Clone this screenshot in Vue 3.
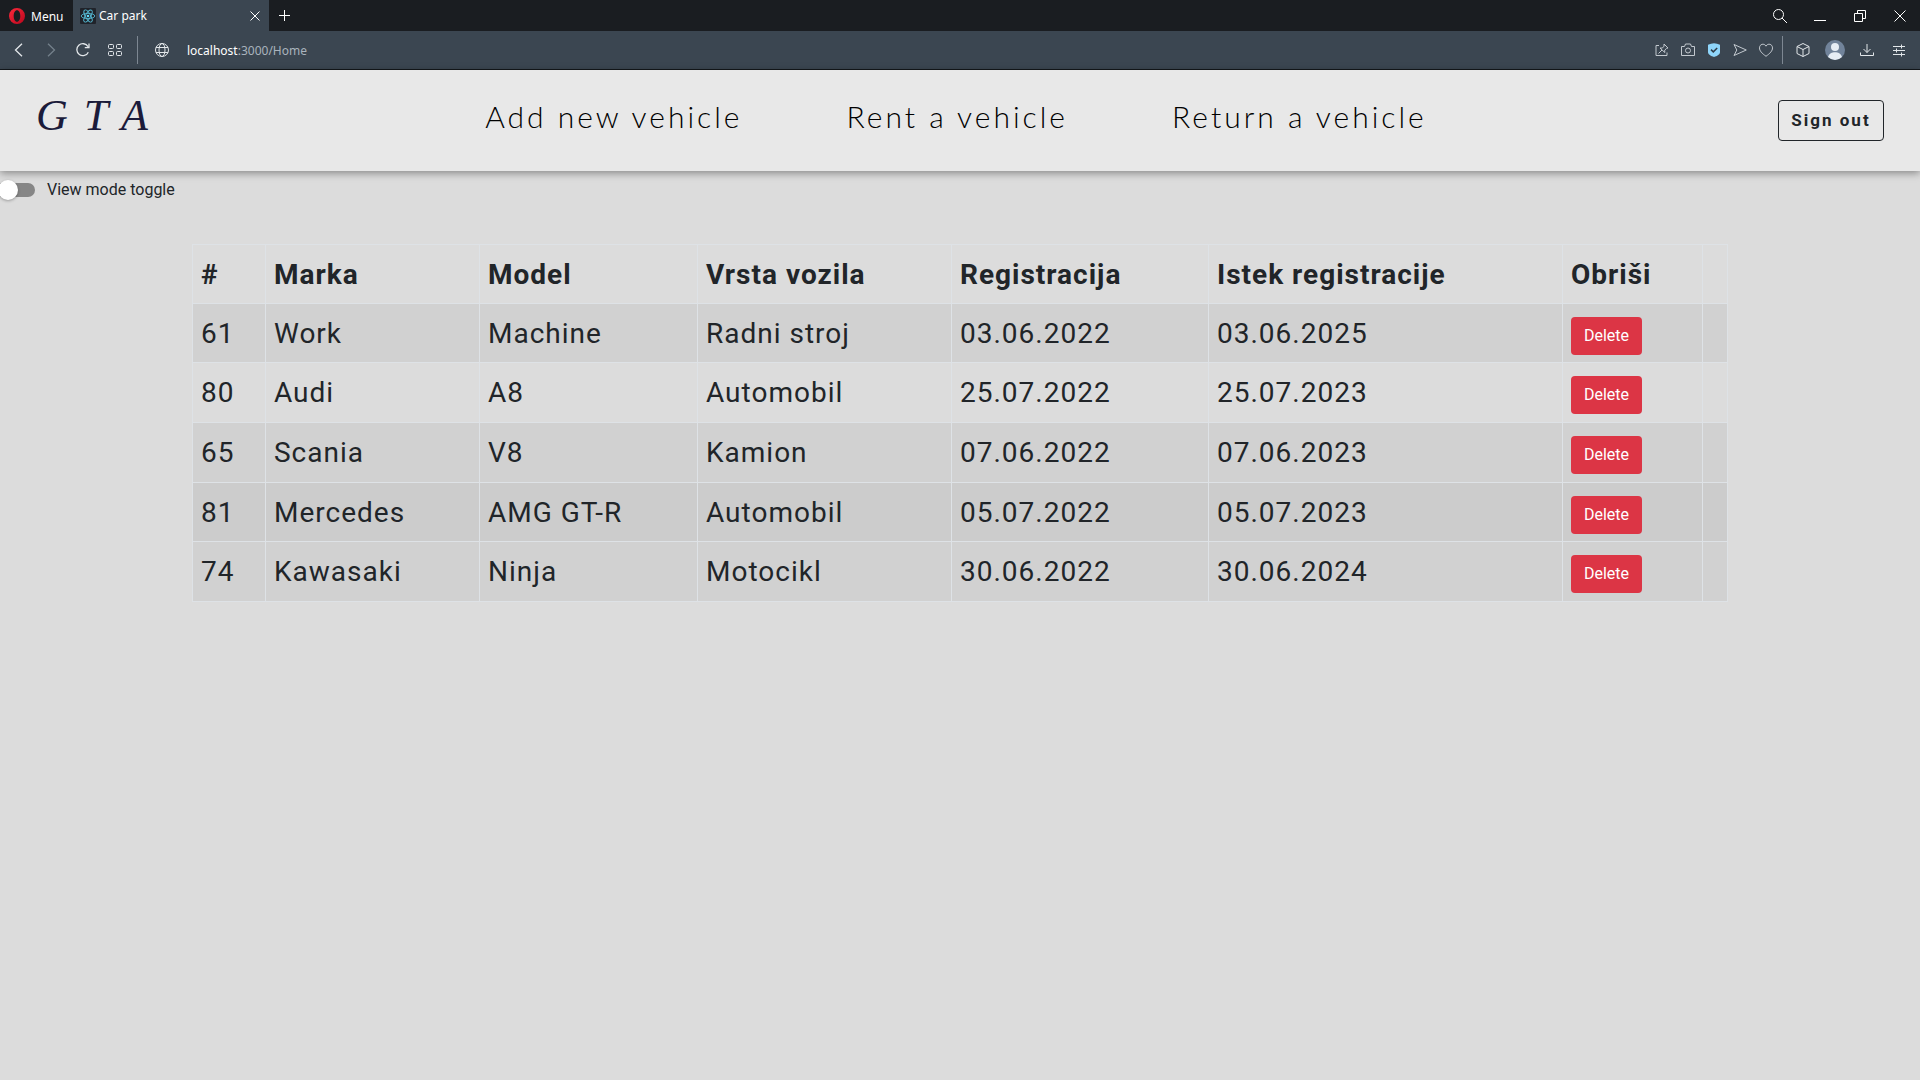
<script setup>
import { ref } from 'vue'

const listView = ref(false)

const links = ['Add new vehicle', 'Rent a vehicle', 'Return a vehicle']

const columns = [
  { label: '#', width: 73 },
  { label: 'Marka', width: 214 },
  { label: 'Model', width: 218 },
  { label: 'Vrsta vozila', width: 254 },
  { label: 'Registracija', width: 257 },
  { label: 'Istek registracije', width: 354 },
  { label: 'Obriši', width: 140 },
  { label: '', width: 25 },
]
const totalWidth = columns.reduce((sum, c) => sum + c.width, 0)

const vehicles = ref([
  { id: 61, brand: 'Work', model: 'Machine', type: 'Radni stroj', registered: '03.06.2022', expires: '03.06.2025' },
  { id: 80, brand: 'Audi', model: 'A8', type: 'Automobil', registered: '25.07.2022', expires: '25.07.2023' },
  { id: 65, brand: 'Scania', model: 'V8', type: 'Kamion', registered: '07.06.2022', expires: '07.06.2023' },
  { id: 81, brand: 'Mercedes', model: 'AMG GT-R', type: 'Automobil', registered: '05.07.2022', expires: '05.07.2023', active: true },
  { id: 74, brand: 'Kawasaki', model: 'Ninja', type: 'Motocikl', registered: '30.06.2022', expires: '30.06.2024' },
])

function remove(id) {
  vehicles.value = vehicles.value.filter((v) => v.id !== id)
}
</script>

<template>
  <div class="browser">
    <div class="titlebar">
      <button class="menu" type="button">
        <svg width="16" height="16" viewBox="0 0 16 16">
          <defs>
            <linearGradient id="ring" x1="0" y1="0" x2="1" y2="1">
              <stop offset="0" stop-color="#ff2a3c" />
              <stop offset="1" stop-color="#b8061c" />
            </linearGradient>
          </defs>
          <path fill="url(#ring)" fill-rule="evenodd" d="M8 0a8 8 0 1 0 0 16A8 8 0 0 0 8 0Zm0 2.2c2 0 3.300 2.600 3.300 5.800S10 13.800 8 13.800 4.700 11.200 4.700 8 6 2.200 8 2.200Z" />
        </svg>
        Menu
      </button>
      <div class="tab">
        <svg class="favicon" width="16" height="16" viewBox="0 0 16 16">
          <rect width="16" height="16" rx="1" fill="#20232a" />
          <g fill="none" stroke="#55b9d3" stroke-width="0.900">
            <ellipse cx="8" cy="8" rx="6.800" ry="2.600" />
            <ellipse cx="8" cy="8" rx="6.800" ry="2.600" transform="rotate(60 8 8)" />
            <ellipse cx="8" cy="8" rx="6.800" ry="2.600" transform="rotate(120 8 8)" />
          </g>
          <circle cx="8" cy="8" r="1.300" fill="#61dafb" />
        </svg>
        <span class="tab-title">Car park</span>
        <button class="tab-close" type="button" aria-label="Close tab">
          <svg width="10" height="10" viewBox="0 0 10 10"><path d="M.5.500l9 9M9.500.500l-9 9" /></svg>
        </button>
      </div>
      <button class="new-tab" type="button" aria-label="New tab">
        <svg width="11" height="11" viewBox="0 0 11 11"><path d="M5.500 0v11M0 5.500h11" /></svg>
      </button>
      <div class="window-controls">
        <button type="button" aria-label="Search">
          <svg width="16" height="16" viewBox="0 0 16 16"><circle cx="6.500" cy="6.500" r="5" /><path d="M10 10l5 5" /></svg>
        </button>
        <button type="button" aria-label="Minimize">
          <svg width="12" height="12" viewBox="0 0 12 12"><path d="M0 11.500h12" /></svg>
        </button>
        <button type="button" aria-label="Restore">
          <svg width="12" height="12" viewBox="0 0 12 12"><path d="M.5 3.500h8v8h-8zM3.500 3.500v-3h8v8h-3" /></svg>
        </button>
        <button type="button" aria-label="Close">
          <svg width="12" height="12" viewBox="0 0 12 12"><path d="M.5.500l11 11M11.500.500l-11 11" /></svg>
        </button>
      </div>
    </div>

    <div class="toolbar">
      <button class="tool" type="button" aria-label="Back">
        <svg width="14" height="14" viewBox="0 0 14 14"><path stroke-width="1.300" d="M10 .8L3.500 7l6.500 6.200" /></svg>
      </button>
      <button class="tool dim" type="button" aria-label="Forward">
        <svg width="14" height="14" viewBox="0 0 14 14"><path stroke-width="1.300" d="M4 .8L10.500 7 4 13.200" /></svg>
      </button>
      <button class="tool" type="button" aria-label="Reload">
        <svg width="14" height="14" viewBox="0 0 14 14"><path stroke-width="1.300" d="M12.300 9.200A6 6 0 1 1 12 3.600M13 .5v4.200H8.800" /></svg>
      </button>
      <button class="tool" type="button" aria-label="Speed dial">
        <svg width="14" height="12" viewBox="0 0 14 12">
          <rect x=".5" y=".5" width="5" height="4" rx="1" /><rect x="8.500" y=".5" width="5" height="4" rx="1" />
          <rect x=".5" y="7.500" width="5" height="4" rx="1" /><rect x="8.500" y="7.500" width="5" height="4" rx="1" />
        </svg>
      </button>
      <span class="divider left"></span>
      <button class="tool" type="button" aria-label="Site information">
        <svg width="14" height="14" viewBox="0 0 14 14"><circle cx="7" cy="7" r="6.500" /><ellipse cx="7" cy="7" rx="3" ry="6.500" /><path d="M1 4.500h12M1 9.500h12" /></svg>
      </button>
      <span class="address">localhost<span>:3000/Home</span></span>

      <div class="tools">
        <button class="tool narrow" type="button" aria-label="Share">
          <svg width="14" height="14" viewBox="0 0 14 14"><path d="M4 2.500H1v10h11V9.500M9 1l4 4-1.500.4-1.800 1.800.1 2.300L5 5l2.300.1L9 3.200zM7 7l-3.500 3.500" /></svg>
        </button>
        <button class="tool narrow" type="button" aria-label="Snapshot">
          <svg width="14" height="14" viewBox="0 0 14 14"><path d="M.5 3.500h3L4.500 1h5l1 2.500h3v9H.500z" /><circle cx="7" cy="7.500" r="2.500" /></svg>
        </button>
        <button class="tool narrow" type="button" aria-label="Protection">
          <svg width="14" height="14" viewBox="0 0 14 14"><path stroke="none" fill="#8fd6fb" d="M1 1.800Q7-1.200 13 1.800V9c0 2.500-3 4-6 5C4 13 1 11.500 1 9z" /><path stroke="#2f3d49" stroke-width="1.500" d="M4 6.600l2.300 2.300L10.200 5" /></svg>
        </button>
        <button class="tool narrow" type="button" aria-label="Send">
          <svg width="14" height="14" viewBox="0 0 14 14"><path d="M1 1.500L13.300 7 1 12.500 3.800 7z" /></svg>
        </button>
        <button class="tool narrow" type="button" aria-label="Favourite">
          <svg width="14" height="14" viewBox="0 0 14 14"><path d="M7 13.300C3 10.300.5 8 .5 4.900.5 1 5.200-.2 7 3.200 8.800-.2 13.500 1 13.500 4.900 13.500 8 11 10.300 7 13.300z" /></svg>
        </button>
        <span class="divider right"></span>
        <button class="tool" type="button" aria-label="Extensions">
          <svg width="14" height="14" viewBox="0 0 14 14"><path d="M7 .5l6 3v7l-6 3-6-3v-7zM1 3.500l6 3 6-3M7 6.500v7" /></svg>
        </button>
        <button class="tool" type="button" aria-label="Profile">
          <svg width="20" height="20" viewBox="0 0 20 20"><g stroke="none"><circle cx="10" cy="10" r="10" fill="#71839a" /><circle cx="10" cy="7" r="4" fill="#e6edf5" /><path fill="#e6edf5" d="M3 17.100C4 13.500 7 12.200 10 12.200s6 1.300 7 4.900A10 10 0 0 1 3 17.100z" /></g></svg>
        </button>
        <button class="tool" type="button" aria-label="Downloads">
          <svg width="14" height="14" viewBox="0 0 14 14"><path d="M7 1v8.500M3.500 6L7 9.500 10.500 6M.5 9.500v3h13v-3" /></svg>
        </button>
        <button class="tool" type="button" aria-label="Easy setup">
          <svg width="12" height="14" viewBox="0 0 12 14"><path d="M0 3.500h12M0 7.500h12M0 11.500h12M8.500 1.500v4M3.500 5.500v4M8.500 9.500v4" /></svg>
        </button>
      </div>
    </div>
  </div>

  <header class="header">
    <a class="logo" href="#">GTA</a>
    <nav class="nav">
      <a v-for="link in links" :key="link" href="#">{{ link }}</a>
    </nav>
    <button class="sign-out" type="button">Sign out</button>
  </header>

  <main>
    <label class="switch">
      <input v-model="listView" type="checkbox" role="switch" />
      View mode toggle
    </label>

    <table class="vehicles">
      <colgroup>
        <col v-for="(c, i) in columns" :key="i" :style="{ width: (c.width / totalWidth) * 100 + '%' }" />
      </colgroup>
      <thead>
        <tr>
          <th v-for="(c, i) in columns" :key="i" scope="col">{{ c.label }}</th>
        </tr>
      </thead>
      <tbody>
        <tr v-for="v in vehicles" :key="v.id" :class="{ active: v.active }">
          <td>{{ v.id }}</td>
          <td>{{ v.brand }}</td>
          <td>{{ v.model }}</td>
          <td>{{ v.type }}</td>
          <td>{{ v.registered }}</td>
          <td>{{ v.expires }}</td>
          <td><button class="delete" type="button" @click="remove(v.id)">Delete</button></td>
          <td></td>
        </tr>
      </tbody>
    </table>
  </main>
</template>

<style>
body {
  background: #dcdcdc;
  color: #212529;
  font-family: Roboto, sans-serif;
  font-size: 16px;
}
</style>

<style scoped>
button {
  border: 0;
  background: none;
  color: inherit;
  font: inherit;
  padding: 0;
  cursor: pointer;
}
a {
  color: inherit;
  text-decoration: none;
}

.browser {
  color: #fff;
  font-family: "Noto Sans", sans-serif;
  font-size: 12px;
  border-bottom: 1px solid #14181c;
}
.browser svg {
  display: block;
  fill: none;
  stroke: currentColor;
}
.browser svg.favicon,
.menu svg {
  stroke: none;
}
.titlebar {
  display: flex;
  align-items: stretch;
  height: 31px;
  background: #1a1d21;
}
.menu {
  display: flex;
  align-items: center;
  gap: 6px;
  width: 73px;
  padding: 1px 0 0 9px;
}
.tab {
  display: flex;
  align-items: center;
  gap: 3px;
  width: 189px;
  padding-left: 7px;
  background: #3b4651;
}
.tab-title {
  flex: 1;
}
.tab-close,
.new-tab {
  display: flex;
  align-items: center;
  justify-content: center;
  width: 28px;
}
.new-tab {
  width: 30px;
}
.window-controls {
  display: flex;
  margin-left: auto;
}
.window-controls button {
  display: flex;
  align-items: center;
  justify-content: center;
  width: 40px;
}
.window-controls button:nth-child(2) {
  align-items: flex-start;
  padding-top: 9px;
}
.toolbar {
  display: flex;
  align-items: center;
  height: 38px;
  padding: 0 5px 0 3px;
  background: #3b4651;
  color: #e3e7ea;
}
.tool {
  display: flex;
  align-items: center;
  justify-content: center;
  width: 32px;
  height: 28px;
}
.tool.narrow {
  width: 26px;
  color: #c3c9cf;
}
.tool.dim {
  color: #74808b;
}
.divider {
  width: 1px;
  height: 28px;
  background: #7d8792;
}
.divider.left {
  margin: 0 8px 0 6px;
}
.divider.right {
  margin: 0 4px 0 3px;
}
.address {
  margin-left: 9px;
  color: #fff;
}
.address span {
  color: #a9b3bd;
}
.tools {
  display: flex;
  align-items: center;
  margin-left: auto;
}

.header {
  display: grid;
  grid-template-columns: 1fr auto 1fr;
  align-items: center;
  height: 101px;
  padding: 0 36px;
  background: #e8e8e8;
  box-shadow: 0 2px 8px rgba(0, 0, 0, 0.4);
}
.logo {
  color: #1b1b3a;
  font: italic 44px "Liberation Serif", serif;
  letter-spacing: 16px;
  padding-bottom: 10px;
}
.nav {
  display: flex;
  gap: 104px;
  color: #000;
  font: 300 30px Lato, sans-serif;
  letter-spacing: 3px;
  padding: 0 8px 10px 0;
}
.sign-out {
  justify-self: end;
  width: 106px;
  height: 41px;
  padding-bottom: 2px;
  border: 1px solid #212529;
  border-radius: 4px;
  font-size: 17px;
  font-weight: 700;
  letter-spacing: 2px;
}

.switch {
  display: flex;
  align-items: center;
  gap: 12px;
  width: max-content;
  height: 37px;
}
.switch input {
  appearance: none;
  position: relative;
  width: 35px;
  height: 14px;
  margin: 0;
  border-radius: 0 7px 7px 0;
  background: #868686;
}
.switch input::before {
  content: "";
  position: absolute;
  top: -3px;
  left: -2px;
  width: 20px;
  height: 20px;
  border-radius: 50%;
  background: #fff;
  box-shadow: 0 1px 3px rgba(0, 0, 0, 0.3);
}
.switch input:checked::before {
  left: 17px;
}

.vehicles {
  width: 80%;
  margin: 36px auto 0;
  border-collapse: collapse;
  table-layout: fixed;
  font-size: 28px;
  line-height: 42px;
  letter-spacing: 1px;
}
.vehicles tr {
  height: 60px;
}
.vehicles thead tr,
.vehicles tbody tr:nth-child(3n + 1) {
  height: 59px;
}
.vehicles th,
.vehicles td {
  padding: 9px 8px 7px;
  border: 1px solid #dee2e6;
  text-align: left;
  vertical-align: top;
  white-space: nowrap;
}
.vehicles tbody tr:nth-child(odd) {
  background: #d1d1d1;
}
.vehicles tbody tr.active {
  background: #cccccc;
}
.delete {
  width: 71px;
  height: 38px;
  border-radius: 4px;
  background: #dc3545;
  color: #fff;
  font-size: 16px;
  line-height: 24px;
  letter-spacing: normal;
  vertical-align: middle;
}
</style>
